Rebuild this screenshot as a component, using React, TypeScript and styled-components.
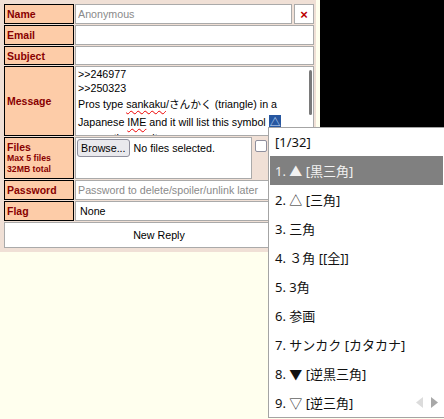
import styled, { createGlobalStyle } from 'styled-components';

const GlobalStyle = createGlobalStyle`
  html, body {
    margin: 0;
    padding: 0;
    background: #ffffee;
  }
  body {
    width: 444px;
    height: 419px;
    overflow: hidden;
    position: relative;
    font-family: "Liberation Sans", Arial, "Noto Sans CJK JP", sans-serif;
  }
`;

const candidates = [
  '▲ [黒三角]',
  '△ [三角]',
  '三角',
  '３角 [[全]]',
  '3角',
  '参画',
  'サンカク [カタカナ]',
  '▼ [逆黒三角]',
  '▽ [逆三角]',
];

const App = () => {
  return (
    <>
      <GlobalStyle />
      <Page>
        <Panel>
          <Label>Name</Label>
          <NameCell>
            <Field placeholder="Anonymous" />
            <ClearButton>×</ClearButton>
          </NameCell>

          <Label>Email</Label>
          <Field />

          <Label>Subject</Label>
          <Field />

          <Label>Message</Label>
          <MessageBox>
            <Line h={14}>&gt;&gt;246977</Line>
            <Line h={14}>&gt;&gt;250323</Line>
            <Line h={18}>
              Pros type <Misspelled>sankaku</Misspelled>/さんかく (triangle) in a
            </Line>
            <Line h={18}>
              Japanese <Misspelled>IME</Misspelled> and it will list this symbol <Selected>△</Selected>
            </Line>
            <Line h={14}>among the results</Line>
            <ScrollThumb />
          </MessageBox>

          <Label>
            Files
            <SmallNote>Max 5 files</SmallNote>
            <SmallNote>32MB total</SmallNote>
          </Label>
          <FilesCell>
            <FileBox>
              <BrowseButton>Browse...</BrowseButton>
              <span>No files selected.</span>
            </FileBox>
            <CheckBox />
          </FilesCell>

          <Label>Password</Label>
          <Field placeholder="Password to delete/spoiler/unlink later" />

          <Label>Flag</Label>
          <FlagSelect>None</FlagSelect>

          <SubmitButton>New Reply</SubmitButton>
        </Panel>
        <Media />
      </Page>

      <CandidateWindow>
        <CandidateHeader>[1/32]</CandidateHeader>
        {candidates.map((text, i) => (
          <Candidate key={i} active={i === 0}>
            {i + 1}. {text}
          </Candidate>
        ))}
        <Pager>
          <svg width="7" height="11" viewBox="0 0 7 11">
            <polygon points="7,0 7,11 0,5.5" fill="#dcdcdc" />
          </svg>
          <svg width="7" height="11" viewBox="0 0 7 11">
            <polygon points="0,0 0,11 7,5.5" fill="#a8a8a8" />
          </svg>
        </Pager>
      </CandidateWindow>
    </>
  );
};

const Page = styled.div`
  display: flex;
  align-items: flex-start;
  gap: 4px;
`;

const Panel = styled.form`
  width: 316px;
  box-sizing: border-box;
  padding: 4px 2px 4px 4px;
  background: #f0e0d6;
  display: grid;
  grid-template-columns: 70px 239px;
  grid-template-rows: 20px 20px 19px 70px 42px 20px 20px 26px;
  gap: 1px;
  font-size: 10.7px;
`;

const Media = styled.div`
  flex: 1;
  height: 140px;
  background: #000;
`;

const Label = styled.div`
  box-sizing: border-box;
  border: 1px solid #000;
  background: #fdcca8;
  color: #800;
  font-weight: bold;
  font-size: 10.5px;
  padding: 0 2px;
  display: flex;
  flex-direction: column;
  justify-content: center;
`;

const SmallNote = styled.span`
  font-size: 8.7px;
  line-height: 11px;
`;

const Field = styled.input`
  box-sizing: border-box;
  width: 100%;
  height: 100%;
  margin: 0;
  border: 1px solid #aaa;
  background: #fff;
  padding: 0 2px;
  font-family: "Liberation Sans", Arial, sans-serif;
  font-size: 10.7px;
  color: #000;
  outline: none;
  &::placeholder {
    color: #8a8a8a;
  }
`;

const NameCell = styled.div`
  display: flex;
  gap: 2px;
`;

const ClearButton = styled.div`
  box-sizing: border-box;
  width: 20px;
  flex-shrink: 0;
  border: 1px solid #aaa;
  background: #fff;
  color: #b00;
  font-weight: bold;
  font-size: 13px;
  display: flex;
  align-items: center;
  justify-content: center;
`;

const MessageBox = styled.div`
  position: relative;
  box-sizing: border-box;
  border: 1px solid #aaa;
  background: #fff;
  padding: 0 2px;
  overflow: hidden;
  color: #000;
`;

const Line = styled.div<{ h: number }>`
  height: ${(p) => p.h}px;
  line-height: ${(p) => p.h}px;
  white-space: nowrap;
`;

const Misspelled = styled.span`
  text-decoration: underline wavy #e00;
  text-decoration-thickness: 1px;
  text-underline-offset: 2px;
`;

const Selected = styled.span`
  display: inline-block;
  background: #2757a0;
  color: #cfe2ff;
  line-height: 14px;
  padding: 0 1px;
`;

const ScrollThumb = styled.div`
  position: absolute;
  right: 1px;
  top: 3px;
  width: 3px;
  height: 45px;
  border-radius: 2px;
  background: #7a7a7a;
`;

const FilesCell = styled.div`
  display: flex;
  align-items: flex-start;
  gap: 3px;
`;

const FileBox = styled.div`
  box-sizing: border-box;
  width: 177px;
  height: 100%;
  border: 1px solid #aaa;
  background: #fff;
  padding: 1px;
  display: flex;
  align-items: flex-start;
  gap: 4px;
  span {
    line-height: 18px;
  }
`;

const BrowseButton = styled.div`
  box-sizing: border-box;
  height: 18px;
  padding: 0 3px;
  border: 1px solid #8f8f9d;
  border-radius: 3px;
  background: #e9e9ed;
  display: flex;
  align-items: center;
`;

const CheckBox = styled.div`
  box-sizing: border-box;
  width: 12px;
  height: 12px;
  margin-top: 3px;
  border: 1px solid #8f8f9d;
  border-radius: 2px;
  background: #fff;
`;

const FlagSelect = styled.div`
  box-sizing: border-box;
  border: 1px solid #aaa;
  background: #fff;
  padding: 0 4px;
  display: flex;
  align-items: center;
`;

const SubmitButton = styled.div`
  grid-column: 1 / -1;
  box-sizing: border-box;
  border: 1px solid #aaa;
  background: #fff;
  display: flex;
  align-items: center;
  justify-content: center;
`;

const CandidateWindow = styled.div`
  position: absolute;
  left: 268px;
  top: 127px;
  width: 177px;
  height: 291px;
  box-sizing: border-box;
  border: 1px solid #a4a4a4;
  background: #fff;
  padding: 0 1px;
  font-family: "Noto Sans", "Noto Sans CJK JP", sans-serif;
  font-size: 13px;
  color: #111;
`;

const CandidateHeader = styled.div`
  height: 28px;
  padding-left: 5px;
  display: flex;
  align-items: center;
`;

const Candidate = styled.div<{ active?: boolean }>`
  height: 29px;
  padding-left: 5px;
  display: flex;
  align-items: center;
  white-space: nowrap;
  background: ${(p) => (p.active ? '#808080' : 'transparent')};
  color: ${(p) => (p.active ? '#f2f2f2' : '#111')};
`;

const Pager = styled.div`
  position: absolute;
  right: 6px;
  bottom: 9px;
  display: flex;
  gap: 8px;
`;

export default App;
